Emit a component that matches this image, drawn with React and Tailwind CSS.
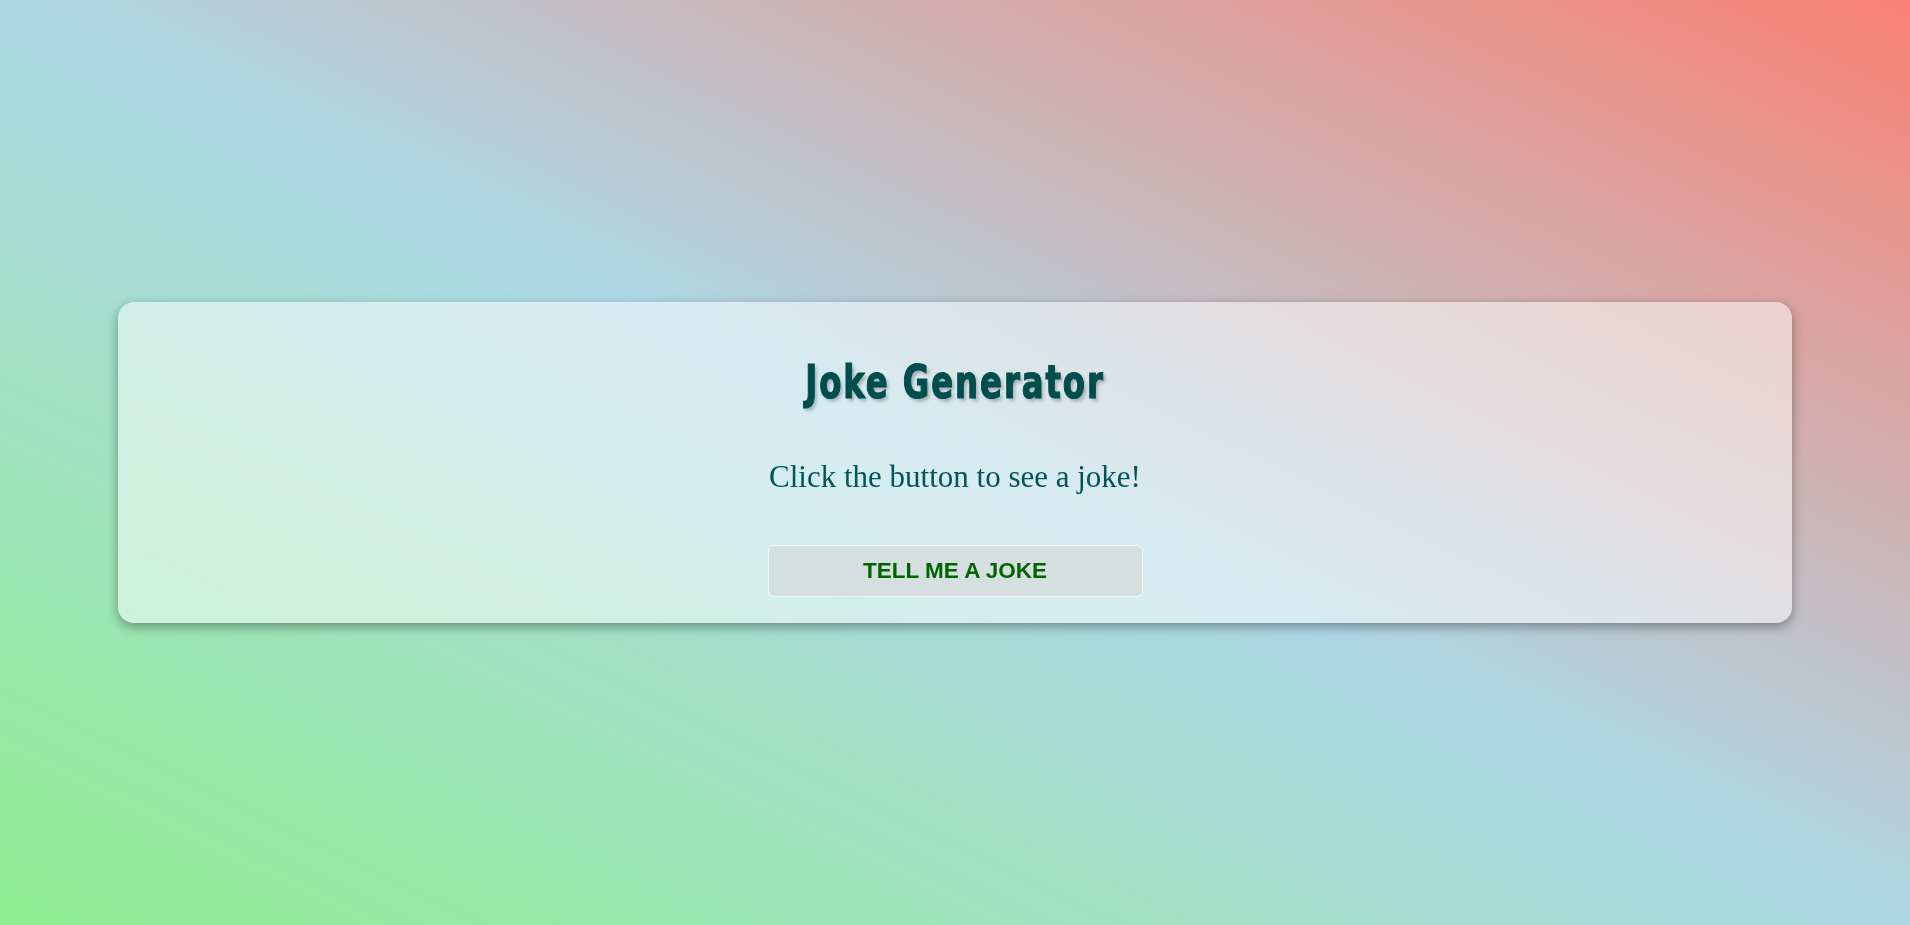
import React from "react";

function App() {
  return (
    <div className="flex h-screen w-full items-center justify-center bg-linear-[to_top_right,#90ee90,#add8e6,#fa8072]">
      {/* card */}
      <div className="flex w-[1674px] flex-col items-center rounded-2xl bg-white/50 px-10 pt-[53px] pb-[26px] shadow-[0_4px_12px_rgba(0,0,0,0.35)] backdrop-blur-md">
        <h1
          className="scale-x-[0.78] text-[46px] font-bold leading-[1.2] tracking-[2.5px] text-[#004d4d] [-webkit-text-stroke:1.2px_#004d4d] [text-shadow:3px_3px_4px_rgba(0,0,0,0.25)]"
          style={{ fontFamily: '"Liberation Sans Narrow", "DejaVu Sans Condensed", sans-serif', fontStretch: "condensed" }}
        >
          Joke Generator
        </h1>
        <p className="mt-[48px] font-['Liberation_Serif',serif] text-[31px] leading-[1.2] text-[#005555]">
          Click the button to see a joke!
        </p>
        <button className="mt-[50px] h-[52px] w-[375px] rounded-md border border-white/70 bg-[#d6dfdf] font-['Liberation_Sans',sans-serif] text-[22.5px] font-bold text-[#006400]">
          TELL ME A JOKE
        </button>
      </div>
    </div>
  );
}

export default App;
